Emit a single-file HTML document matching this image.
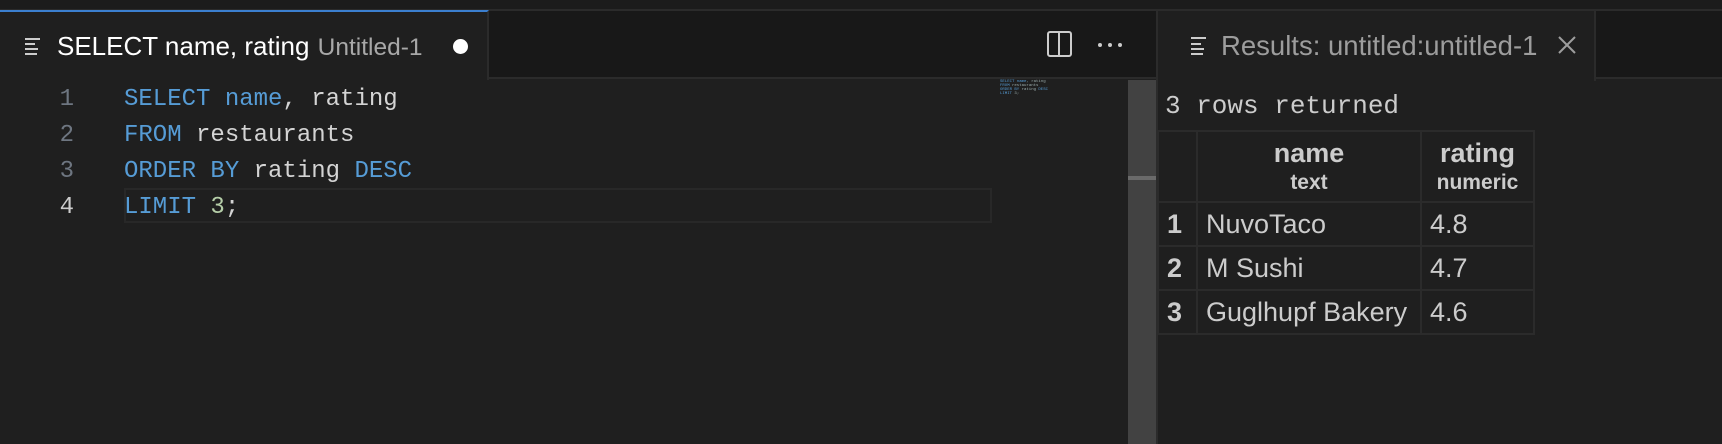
<!DOCTYPE html>
<html><head><meta charset="utf-8"><style>
*{margin:0;padding:0;box-sizing:border-box}
body{width:1722px;height:444px;background:#1f1f1f;position:relative;overflow:hidden;font-family:"Liberation Sans",sans-serif}
.abs{position:absolute}
.mono{font-family:"Liberation Mono",monospace}
.kw{color:#569cd6}
.ln{position:absolute;left:40px;width:34px;text-align:right;color:#6e7681;font-size:24px}
.code{position:absolute;left:124px;font-size:24px;color:#d4d4d4;white-space:pre}
td{border:2px solid #2b2b2b;color:#cccccc;font-size:27px;height:44px;padding:0 8px;white-space:nowrap}
</style></head><body>
<div class="abs" style="left:0;top:0;width:1722px;height:9px;background:#1c1c1c"></div>
<div class="abs" style="left:0;top:9px;width:1722px;height:2px;background:#2b2b2b"></div>
<!-- tab bar left -->
<div class="abs" style="left:0;top:11px;width:1156px;height:68px;background:#181818;border-bottom:2px solid #2b2b2b"></div>
<div class="abs" style="left:0;top:10px;width:489px;height:70px;background:#1f1f1f;border-top:2px solid #3b7fcf;border-right:2px solid #2b2b2b"></div>
<svg class="abs" style="left:25px;top:37px" width="18" height="18"><g stroke="#cccccc" stroke-width="2"><line x1="0" y1="2" x2="15" y2="2"/><line x1="0" y1="7" x2="10" y2="7"/><line x1="0" y1="12" x2="13" y2="12"/><line x1="0" y1="17" x2="12" y2="17"/></g></svg>
<div class="abs" style="left:57px;top:31px;font-size:26px;color:#ffffff;white-space:nowrap">SELECT name, rating <span style="color:#a8a8a8;font-size:24.5px;margin-left:1px">Untitled-1</span></div>
<div class="abs" style="left:453px;top:39px;width:15px;height:15px;border-radius:50%;background:#fff"></div>
<div class="abs" style="left:1047px;top:31px;width:25px;height:26px;border:2px solid #ccc;border-radius:3px"></div>
<div class="abs" style="left:1058px;top:31px;width:2px;height:26px;background:#ccc"></div>
<div class="abs" style="left:1098px;top:43px;width:4px;height:4px;border-radius:50%;background:#ccc;box-shadow:10px 0 #ccc,20px 0 #ccc"></div>
<!-- editor -->
<div class="abs" style="left:124px;top:188px;width:868px;height:35px;border:2px solid #282828"></div>
<div class="ln mono" style="top:86px">1</div>
<div class="ln mono" style="top:122px">2</div>
<div class="ln mono" style="top:158px">3</div>
<div class="ln mono" style="top:194px;color:#cccccc">4</div>
<div class="code mono" style="top:86px"><span class="kw">SELECT</span> <span class="kw">name</span>, rating</div>
<div class="code mono" style="top:122px"><span class="kw">FROM</span> restaurants</div>
<div class="code mono" style="top:158px"><span class="kw">ORDER BY</span> rating <span class="kw">DESC</span></div>
<div class="code mono" style="top:194px"><span class="kw">LIMIT</span> <span style="color:#b5cea8">3</span>;</div>
<div class="abs mono" style="left:1000px;top:80px;font-size:4px;line-height:4px;color:#9aa;white-space:pre"><span class="kw">SELECT name</span>, rating
<span class="kw">FROM</span> restaurants
<span class="kw">ORDER BY</span> rating <span class="kw">DESC</span>
<span class="kw">LIMIT</span> 3;</div>
<div class="abs" style="left:1128px;top:80px;width:28px;height:364px;background:#424242"></div>
<div class="abs" style="left:1128px;top:176px;width:28px;height:4px;background:#6a6a6a"></div>
<div class="abs" style="left:1156px;top:9px;width:2px;height:435px;background:#2b2b2b"></div>
<!-- results -->
<div class="abs" style="left:1158px;top:11px;width:564px;height:68px;background:#181818;border-bottom:2px solid #2b2b2b"></div>
<div class="abs" style="left:1158px;top:11px;width:438px;height:70px;background:#1f1f1f;border-right:2px solid #2b2b2b"></div>
<svg class="abs" style="left:1191px;top:36px" width="18" height="20"><g stroke="#cccccc" stroke-width="2"><line x1="0" y1="2" x2="15" y2="2"/><line x1="0" y1="8" x2="10" y2="8"/><line x1="0" y1="13" x2="13" y2="13"/><line x1="0" y1="18" x2="12" y2="18"/></g></svg>
<div class="abs" style="left:1221px;top:30px;font-size:27.5px;color:#9d9d9d;white-space:nowrap">Results: untitled:untitled-1</div>
<svg class="abs" style="left:1558px;top:36px" width="18" height="18"><path d="M1 1L17 17M17 1L1 17" stroke="#9d9d9d" stroke-width="2"/></svg>
<div class="abs mono" style="left:1165px;top:91px;font-size:26px;color:#cccccc;white-space:pre">3 rows returned</div>
<table class="abs" style="left:1157px;top:130px;border-collapse:collapse">
<tr style="height:71px"><td style="width:39px"></td><td style="width:224px;text-align:center;font-weight:bold;line-height:27px;padding-top:2px">name<br><span style="font-size:21px">text</span></td><td style="width:113px;text-align:center;font-weight:bold;line-height:27px;padding-top:2px">rating<br><span style="font-size:21px">numeric</span></td></tr>
<tr><td style="font-weight:bold">1</td><td>NuvoTaco</td><td>4.8</td></tr>
<tr><td style="font-weight:bold">2</td><td>M Sushi</td><td>4.7</td></tr>
<tr><td style="font-weight:bold">3</td><td>Guglhupf Bakery</td><td>4.6</td></tr>
</table>
</body></html>
